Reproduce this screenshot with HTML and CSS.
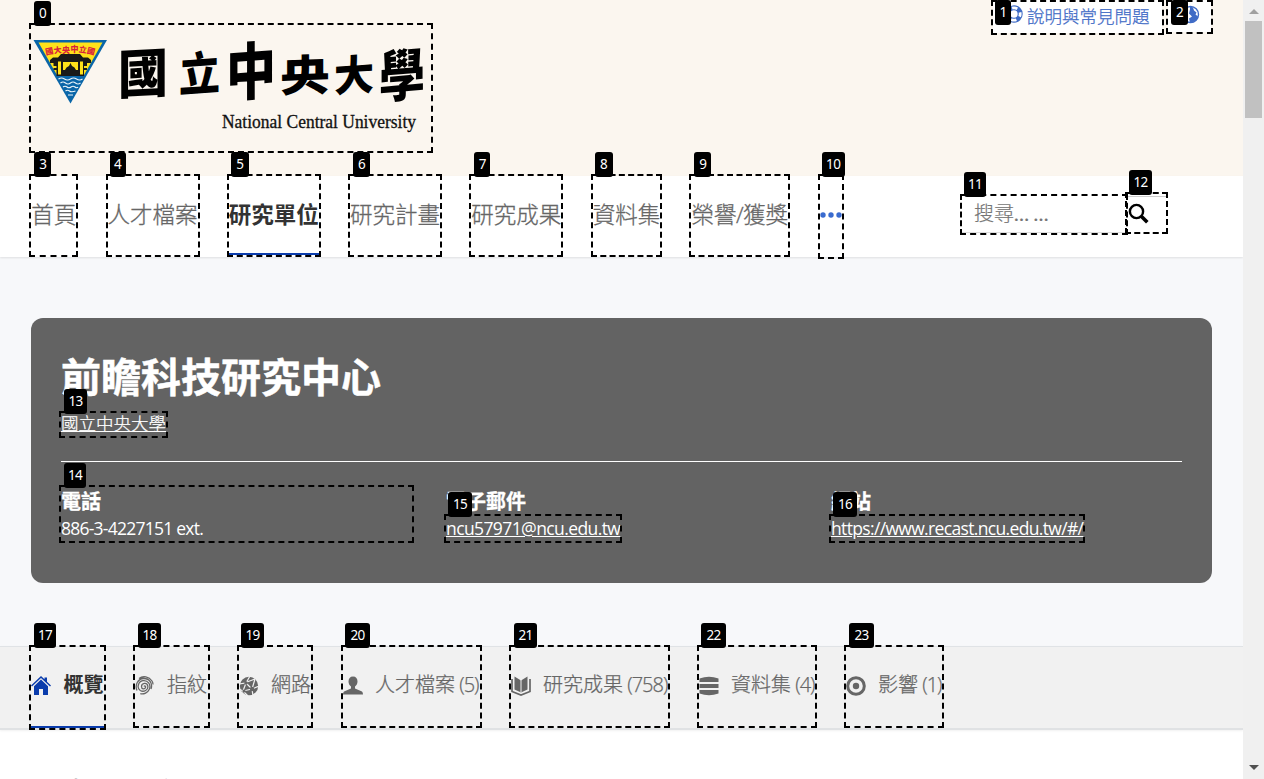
FILE: index.html
```html
<!DOCTYPE html>
<html lang="zh-Hant">
<head>
<meta charset="utf-8">
<title>前瞻科技研究中心 - 國立中央大學</title>
<link rel="stylesheet" href="styles.css">
</head>
<body>
<div class="page">
  <header class="top">
    <a class="logo marked">
      <svg width="400" height="126" viewBox="31 25 400 126">
        <path d="M33.500 40H107L70.500 103.500Z" fill="#0a66a8"/>
        <path d="M38.500 42.500H102.500L83.500 76H57.500Z" fill="#ffe11a"/>
        <path d="M50 60l3-2.500h5l3-3.500h19l3 3.500h5l3 2.500v3h-4v3h-3v2h3v2h-3v6H56.500v-6h-3v-2h3v-2h-3v-3h-3.500z" fill="#1a1a18"/>
        <path d="M58 61.500h3v13h-3zM80 61.500h3v13h-3zM63 62h15v8h-2q-1-3-4-4l-1.500-3-1.500 3q-3 1-4 4h-2z" fill="#ffe11a"/>
        <path d="M58.500 79q3-2 6 0t6 0 6 0 6 0M60.500 83q2.500-2 5 0t5 0 5 0 5 0M63 87q2-1.500 4 0t4 0 4 0 3 0M65.500 91q2-1.500 4 0t6 0M68 95h5" fill="none" stroke="#eef6fa" stroke-width="1.200"/>
        <text class="emblem-text" x="46 54 62 70.500 78.500 86.500" y="55 53.500 52.500 51.500 52 53" rotate="-12 -6 0 0 8 14">國大央中立國</text>
        <g class="brush">
          <text transform="translate(118 94) skewY(-3) scale(1 1.060)">國</text>
          <text transform="translate(179 92) skewY(-4) scale(.82 .92)">立</text>
          <text transform="translate(226 96) skewY(-4) scale(1 1.240)">中</text>
          <text transform="translate(280 92) skewY(-2) scale(1 .86)">央</text>
          <text transform="translate(334 92) skewY(-4) scale(.8 .84)">大</text>
          <text transform="translate(379 98) skewY(-5) scale(.92 1.120)">學</text>
        </g>
        <text class="logo-en" x="222" y="128" textLength="194" lengthAdjust="spacingAndGlyphs">National Central University</text>
      </svg>
      <span class="mark"><b class="tag w17">0</b></span>
    </a>
    <div class="utils">
      <a class="help marked">
        <svg width="18" height="18" viewBox="0 0 18 18" fill="none"><circle cx="9" cy="9" r="6.200" stroke="#3f6bc6" stroke-width="5"/><circle cx="9" cy="9" r="6.200" stroke="#fff" stroke-width="2.800" stroke-dasharray="5.500 4.240" stroke-dashoffset="2.750"/></svg>
        <span>說明與常見問題</span>
        <span class="mark"><b class="tag w16">1</b></span>
      </a>
      <a class="lang marked">
        <svg width="19" height="19" viewBox="0 0 19 19"><circle cx="9.500" cy="9.500" r="8" fill="#fff" stroke="#3f6bc6" stroke-width="1.400"/><path d="M9 1.500l3 1 1 3 2.500 2-1 2 2.500 2-1 3-4 2.500-3 .5-1-4 3-2-3-3 1-4z" fill="#3f6bc6"/></svg>
        <span class="mark"><b class="tag w17">2</b></span>
      </a>
    </div>
  </header>
  <nav class="nav">
    <a class="item marked">首頁<span class="mark"><b class="tag w17">3</b></span></a>
    <a class="item marked">人才檔案<span class="mark"><b class="tag w16 near">4</b></span></a>
    <a class="item marked active">研究單位<span class="mark"><b class="tag w18 near">5</b></span></a>
    <a class="item marked">研究計畫<span class="mark"><b class="tag w17">6</b></span></a>
    <a class="item marked">研究成果<span class="mark"><b class="tag w16">7</b></span></a>
    <a class="item marked">資料集<span class="mark"><b class="tag w18 near">8</b></span></a>
    <a class="item marked honors">榮譽<i>/</i>獲獎<span class="mark"><b class="tag w17">9</b></span></a>
    <a class="item marked more"><svg width="22" height="6" viewBox="0 0 22 6" fill="#3a6bcf"><circle cx="3" cy="3" r="2.700"/><circle cx="11" cy="3" r="2.700"/><circle cx="19" cy="3" r="2.700"/></svg><span class="mark"><b class="tag w23 near">10</b></span></a>
    <div class="search">
      <div class="field marked">搜尋<span class="dots">……</span><span class="mark"><b class="tag w22 near">11</b></span></div>
      <div class="go marked"><svg width="21" height="21" viewBox="0 0 21 21" fill="none" stroke="#000"><circle cx="8.500" cy="8.500" r="6.600" stroke-width="2.400"/><path d="M13.300 13.300l6 6" stroke-width="3.600"/></svg><span class="mark"><b class="tag w23 near">12</b></span></div>
    </div>
  </nav>
  <section class="hero">
    <div class="card">
      <h1>前瞻科技研究中心</h1>
      <a class="org marked">國立中央大學<span class="mark"><b class="tag w23">13</b></span></a>
      <div class="contacts">
        <div class="contact marked"><h2>電話</h2><span class="phone">886-3-4227151 ext.</span><span class="mark"><b class="tag w22">14</b></span></div>
        <div class="contact"><h2>電子郵件</h2><a class="mail marked">ncu57971@ncu.edu.tw<span class="mark"><b class="tag w24 near">15</b></span></a></div>
        <div class="contact"><h2>網站</h2><a class="site marked">https://www.recast.ncu.edu.tw/#/<span class="mark"><b class="tag w24 near">16</b></span></a></div>
      </div>
    </div>
  </section>
  <nav class="tabs">
    <a class="tab marked t1 active"><svg viewBox="0 0 20 20" fill="#0a3cac"><path d="M10 0L0 9.500l1 1 9-8.500 9 8.500 1-1-4-3.800V1.500h-2.500v1.800z"/><path d="M10 3.500l-7 6.700V19h5v-6h4v6h5v-8.800z"/></svg><span>概覽</span><span class="mark"><b class="tag w22">17</b></span></a>
    <a class="tab marked t2"><svg viewBox="0 0 20 20" fill="none" stroke="#666" stroke-width="1.300"><path d="M9 10.500c.5-1 2-.5 1.500 1-.7 2-4 1.800-4-1C6.500 7 12 6 12.800 10c.7 4-4 6.500-7.500 4.500-4-2.500-2-9 2.500-9.800 5-.8 8.500 4 6.500 8.500-1.500 3.500-5.500 5.500-9 4.500M2 14.500C-.5 9 3 2.800 8.500 2.500c6-.2 9.500 5 7.500 10.500M4 2.500C8-.5 14 .5 17 5c.8 1.200 1 2 1 3.500"/></svg><span>指紋</span><span class="mark"><b class="tag w23">18</b></span></a>
    <a class="tab marked t3"><svg viewBox="0 0 20 20"><circle cx="10" cy="10" r="9.200" fill="#666"/><path d="M0 8l7-1 6 6 1 7M7 7l4-7M13 13l7-3M7 7l-3 8 9-2M4 15l-2 3M4 15l5 5M8 6l8-3M13 13l3-10M0 13l4 2" fill="none" stroke="#f1f1f1" stroke-width="1.200"/><circle cx="7" cy="7" r="1.800" fill="#666"/><circle cx="13" cy="13" r="2.200" fill="#666"/><circle cx="5" cy="15" r="1.600" fill="#666"/></svg><span>網路</span><span class="mark"><b class="tag w23 near">19</b></span></a>
    <a class="tab marked t4"><svg viewBox="0 0 20 20" fill="#666"><path d="M10 .5c3 0 4.500 2 4.500 5 0 2-1 4-2.500 5v2l7 3q1 .8 1 3H0q0-2.200 1-3l7-3v-2c-1.500-1-2.500-3-2.500-5 0-3 1.500-5 4.500-5z"/></svg><span>人才檔案 <i>(5)</i></span><span class="mark"><b class="tag w25 near">20</b></span></a>
    <a class="tab marked t5"><svg viewBox="0 0 20 20"><path d="M3.500 .5l6.500 4 6.500-4v13L10 16.500l-6.500-3z" fill="#666"/><path d="M10 4v12.500" stroke="#f1f1f1" stroke-width="1"/><path d="M1 3v12.500l9 3.500 9-3.500V3" fill="none" stroke="#666" stroke-width="1.700"/></svg><span>研究成果 <i>(758)</i></span><span class="mark"><b class="tag w23">21</b></span></a>
    <a class="tab marked t6"><svg viewBox="0 0 20 20" fill="#666"><path d="M.5 2.500Q10-1 19.500 2.500V6H.500zM.500 8H19.500v4H.500zM.500 14H19.500v3.500Q10 21 .500 17.500z"/></svg><span>資料集 <i>(4)</i></span><span class="mark"><b class="tag w25 near">22</b></span></a>
    <a class="tab marked t7"><svg viewBox="0 0 20 20"><circle cx="10" cy="10" r="8.300" fill="none" stroke="#666" stroke-width="3"/><circle cx="10" cy="10" r="3.200" fill="#666"/></svg><span>影響 <i>(1)</i></span><span class="mark"><b class="tag w25">23</b></span></a>
  </nav>
  <main class="content"><h2>查看研究主題</h2></main>
</div>
<div class="scrollbar"><i class="up"></i><i class="thumb"></i><i class="down"></i></div>
</body>
</html>
```

FILE: styles.css
```css
* { box-sizing: border-box; }
body {
  margin: 0; width: 1264px; height: 779px; overflow: hidden; display: flex;
  font-family: "Open Sans", "Noto Sans CJK TC", sans-serif; color: #666; background: #fff;
}
h1, h2 { margin: 0; }
a { color: inherit; white-space: nowrap; }
i { font-style: normal; }
svg { flex: none; display: block; }
.page { width: 1243px; height: 779px; overflow: hidden; }

/* numbered dashed frames */
.marked { position: relative; }
.mark { position: absolute; inset: -2px; border: 2px dashed #000; pointer-events: none; z-index: 2; }
.tag {
  position: absolute; left: 3px; top: -24px; height: 25px; border-radius: 3px; background: #000;
  color: #fff; font: 400 13.5px/25px "Noto Sans", sans-serif; letter-spacing: -.6px; text-align: center;
  -webkit-text-stroke: 0;
}
.near { left: 2px; }
.w16 { width: 16px; } .w17 { width: 17px; } .w18 { width: 18px; } .w22 { width: 22px; }
.w23 { width: 23px; } .w24 { width: 24px; } .w25 { width: 25px; }

.top { height: 176px; background: #fbf6ef; display: flex; justify-content: space-between; padding: 0 32px 0 31px; }
.logo { margin-top: 25px; width: 400px; height: 126px; }
.brush { font: 900 50px "Noto Sans CJK TC", sans-serif; fill: #000; }
.emblem-text { font: 900 8px "Noto Sans CJK TC", sans-serif; fill: #d8213c; }
.logo-en { font: 18px "Liberation Serif", serif; fill: #111; stroke: #111; stroke-width: .3px; }
.utils { display: flex; gap: 6px; }
.help, .lang { background: #fff; color: #3f6bc6; display: flex; font-size: 17.5px; font-weight: 300; -webkit-text-stroke: .25px; }
.help { height: 33px; width: 169px; line-height: 33px; padding-left: 12px; gap: 4px; }
.help svg { margin-top: 5px; }
.help .mark { top: 0; bottom: auto; height: 35px; }
.lang { width: 43px; height: 32px; padding: 5px 0 0 13px; }
.lang .mark { top: 0; bottom: auto; height: 34px; }
.help .tag { left: 2px; }
.utils .tag { top: -2px; }

.nav {
  position: relative; z-index: 1; height: 81px; padding-left: 31.3px; display: flex; gap: 31.25px;
  background: #fff; box-shadow: 0 1px 2px rgba(0,0,0,.1);
}
.item { height: 79px; font-size: 22.5px; font-weight: 300; line-height: 78px; -webkit-text-stroke: .3px; }
.item.active { font-weight: 700; color: #333; box-shadow: inset 0 -2px #0a3cac; -webkit-text-stroke: 0; }
.honors { width: 97px; }
.honors i { display: inline-block; width: 7px; margin-left: -.5px; }
.more { width: 22px; height: 81px; padding-top: 36px; }
.search { display: flex; margin: 18px 0 0 89.200px; height: 40px; }
.field {
  margin-top: 2px; width: 164px; height: 37px; padding-left: 12px; font-size: 20px; font-weight: 300; line-height: 35px;
  box-shadow: inset 0 -1px #ddd; -webkit-text-stroke: .2px; color: #757575;
}
.dots { font: 20px Lato, sans-serif; letter-spacing: 4.500px; display: inline-block; width: 38px; white-space: nowrap; }
.go { width: 39px; height: 38px; padding: 9px 0 0 1px; margin-left: 1px; box-shadow: inset 0 2px #fff, inset 0 3px #ccc; }

.hero { height: 389px; background: #f7f8fa; padding: 61px 31px 0; }
.card { height: 265px; border-radius: 12px; background: #636363; color: #fff; padding: 29px 30px 0; }
h1 { font-size: 40px; line-height: 59px; font-weight: 700; height: 66px; -webkit-text-stroke: .5px; }
.org { display: block; width: 105px; height: 23px; font-size: 17.5px; line-height: 21px; text-decoration: underline; font-weight: 300; -webkit-text-stroke: .25px; }
.contacts { margin-top: 25px; border-top: 1px solid #fff; padding-top: 25px; display: grid; grid-template-columns: repeat(3, 351px); gap: 34px; }
.contact { height: 54px; font-size: 17.5px; }
.contact h2 { font-size: 20px; line-height: 29px; height: 29px; -webkit-text-stroke: .3px; }
.phone, .mail, .site { display: block; line-height: 24px; height: 25px; font-family: "Open Sans", sans-serif; }
.phone { letter-spacing: -.76px; }
.mail, .site { text-decoration: underline; }
.mail { width: 174px; letter-spacing: -.6px; }
.site { width: 252px; letter-spacing: -.66px; }

.tabs {
  position: relative; height: 84px; background: #f1f1f1; border-top: 1px solid #e0e3e6; border-bottom: 2px solid #e0e2e4;
  padding-left: 31px; display: flex; gap: 31px; font-size: 20px; font-weight: 300; box-shadow: 0 1px 2px rgba(0,0,0,.06);
}
.tab { height: 79px; display: flex; gap: 12px; line-height: 75px; -webkit-text-stroke: .25px; }
.tab i { letter-spacing: -1px; margin-left: -1px; }
.tab svg { width: 20px; height: 20px; margin-top: 29px; }
.t1.active { height: 81px; font-weight: 700; color: #333; box-shadow: inset 0 -2px #0a3cac; -webkit-text-stroke: 0; gap: 12.500px; }
.t1, .t2 { width: 73px; } .t3 { width: 72px; } .t4 { width: 137px; margin-left: 1px; } .t5 { width: 157px; } .t6 { width: 116px; } .t7 { width: 96px; }
.content { padding: 48px 61px 0; color: #333; }
.content h2 { font-size: 30px; line-height: 30px; font-weight: 400; }

.scrollbar { width: 21px; height: 779px; background: #f0f0f0; display: flex; flex-direction: column; align-items: center; }
.up, .down { border: 5px solid transparent; }
.up { border-bottom-color: #a0a0a0; border-top: 0; margin-top: 9px; }
.thumb { margin-top: 7px; width: 17px; height: 97px; background: #c1c1c1; }
.down { margin: auto 0 9px; border-top-color: #505050; border-bottom: 0; }
```
